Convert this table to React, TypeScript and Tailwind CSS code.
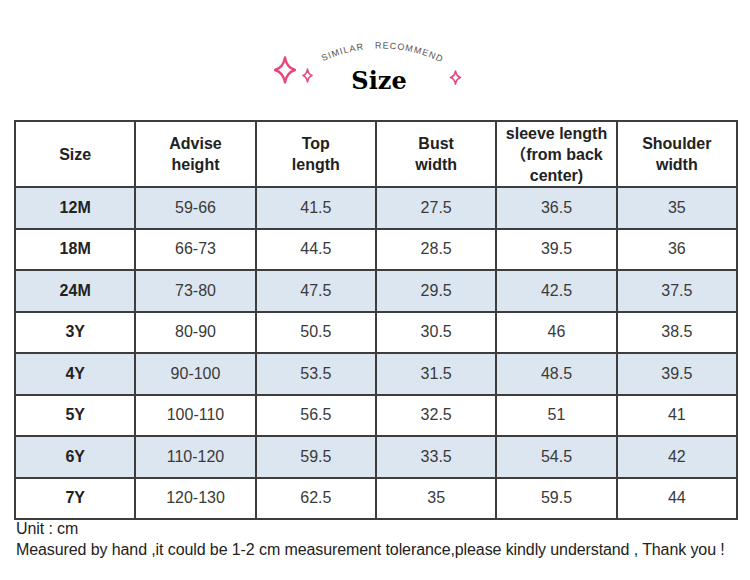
import React from "react";

const headers = ["Size", "Advise\nheight", "Top\nlength", "Bust\nwidth", "sleeve length\n（from back\ncenter)", "Shoulder\nwidth"];
const rows = [
  ["12M", "59-66", "41.5", "27.5", "36.5", "35"],
  ["18M", "66-73", "44.5", "28.5", "39.5", "36"],
  ["24M", "73-80", "47.5", "29.5", "42.5", "37.5"],
  ["3Y", "80-90", "50.5", "30.5", "46", "38.5"],
  ["4Y", "90-100", "53.5", "31.5", "48.5", "39.5"],
  ["5Y", "100-110", "56.5", "32.5", "51", "41"],
  ["6Y", "110-120", "59.5", "33.5", "54.5", "42"],
  ["7Y", "120-130", "62.5", "35", "59.5", "44"],
];

function star(cx: number, cy: number, w: number, h: number) {
  const k = 0.18;
  return `M ${cx} ${cy - h} Q ${cx + w * k} ${cy - h * k} ${cx + w} ${cy} Q ${cx + w * k} ${cy + h * k} ${cx} ${cy + h} Q ${cx - w * k} ${cy + h * k} ${cx - w} ${cy} Q ${cx - w * k} ${cy - h * k} ${cx} ${cy - h} Z`;
}

export default function App() {
  return (
    <div className="w-[750px] h-[580px] bg-white overflow-hidden" style={{ fontFamily: '"Liberation Sans", Arial, "Noto Sans CJK SC", sans-serif' }}>
      <div className="relative h-[120px] flex justify-center pt-[69px]">
        <svg className="absolute left-0 top-0" width="750" height="120" viewBox="0 0 750 120">
          <defs>
            <path id="arc" d="M 316 65 A 136 136 0 0 1 446 65" fill="none" />
          </defs>
          <text fontSize="9" fill="#555" letterSpacing="1.0" fontFamily="Liberation Sans, Arial, sans-serif">
            <textPath href="#arc" startOffset="8">{"SIMILAR\u00A0\u00A0\u00A0RECOMMEND"}</textPath>
          </text>
          <path d={star(285, 70, 10, 12.5)} fill="none" stroke="#e8477c" strokeWidth="2.4" strokeLinejoin="round" />
          <path d={star(307.5, 75.5, 4.5, 6.5)} fill="none" stroke="#e8477c" strokeWidth="1.6" strokeLinejoin="round" />
          <path d={star(455.5, 77.5, 5, 6.5)} fill="none" stroke="#e8477c" strokeWidth="1.6" strokeLinejoin="round" />
        </svg>
        <div className="relative ml-[8px] text-[24px] leading-none font-bold text-black" style={{ fontFamily: '"DejaVu Serif", serif' }}>
          Size
        </div>
      </div>
      <div className="pl-[14px]">
        <table className="w-[724px] border-collapse table-fixed">
          <thead>
            <tr>
              {headers.map((h, i) => (
                <th key={i} className="h-[66px] border-2 border-[#3d3d3d] bg-white text-[16px] leading-[21px] font-bold text-[#222] text-center align-middle whitespace-pre-line px-0">
                  {h}
                </th>
              ))}
            </tr>
          </thead>
          <tbody>
            {rows.map((r, ri) => (
              <tr key={ri} className={ri % 2 === 0 ? "bg-[#dce6f1]" : "bg-white"}>
                {r.map((c, ci) => (
                  <td key={ci} className={`h-[41.5px] border-2 border-[#3d3d3d] text-center align-middle text-[16px] ${ci === 0 ? "font-bold text-[#222]" : "text-[#3a3a3a]"}`}>
                    {c}
                  </td>
                ))}
              </tr>
            ))}
          </tbody>
        </table>
      </div>
      <div className="pl-[16px] -mt-[2px] text-[16px] leading-[21px] text-[#222] tracking-[-0.1px]">
        <div>Unit : cm</div>
        <div>Measured by hand ,it could be 1-2 cm measurement tolerance,please kindly understand , Thank you !</div>
      </div>
    </div>
  );
}
